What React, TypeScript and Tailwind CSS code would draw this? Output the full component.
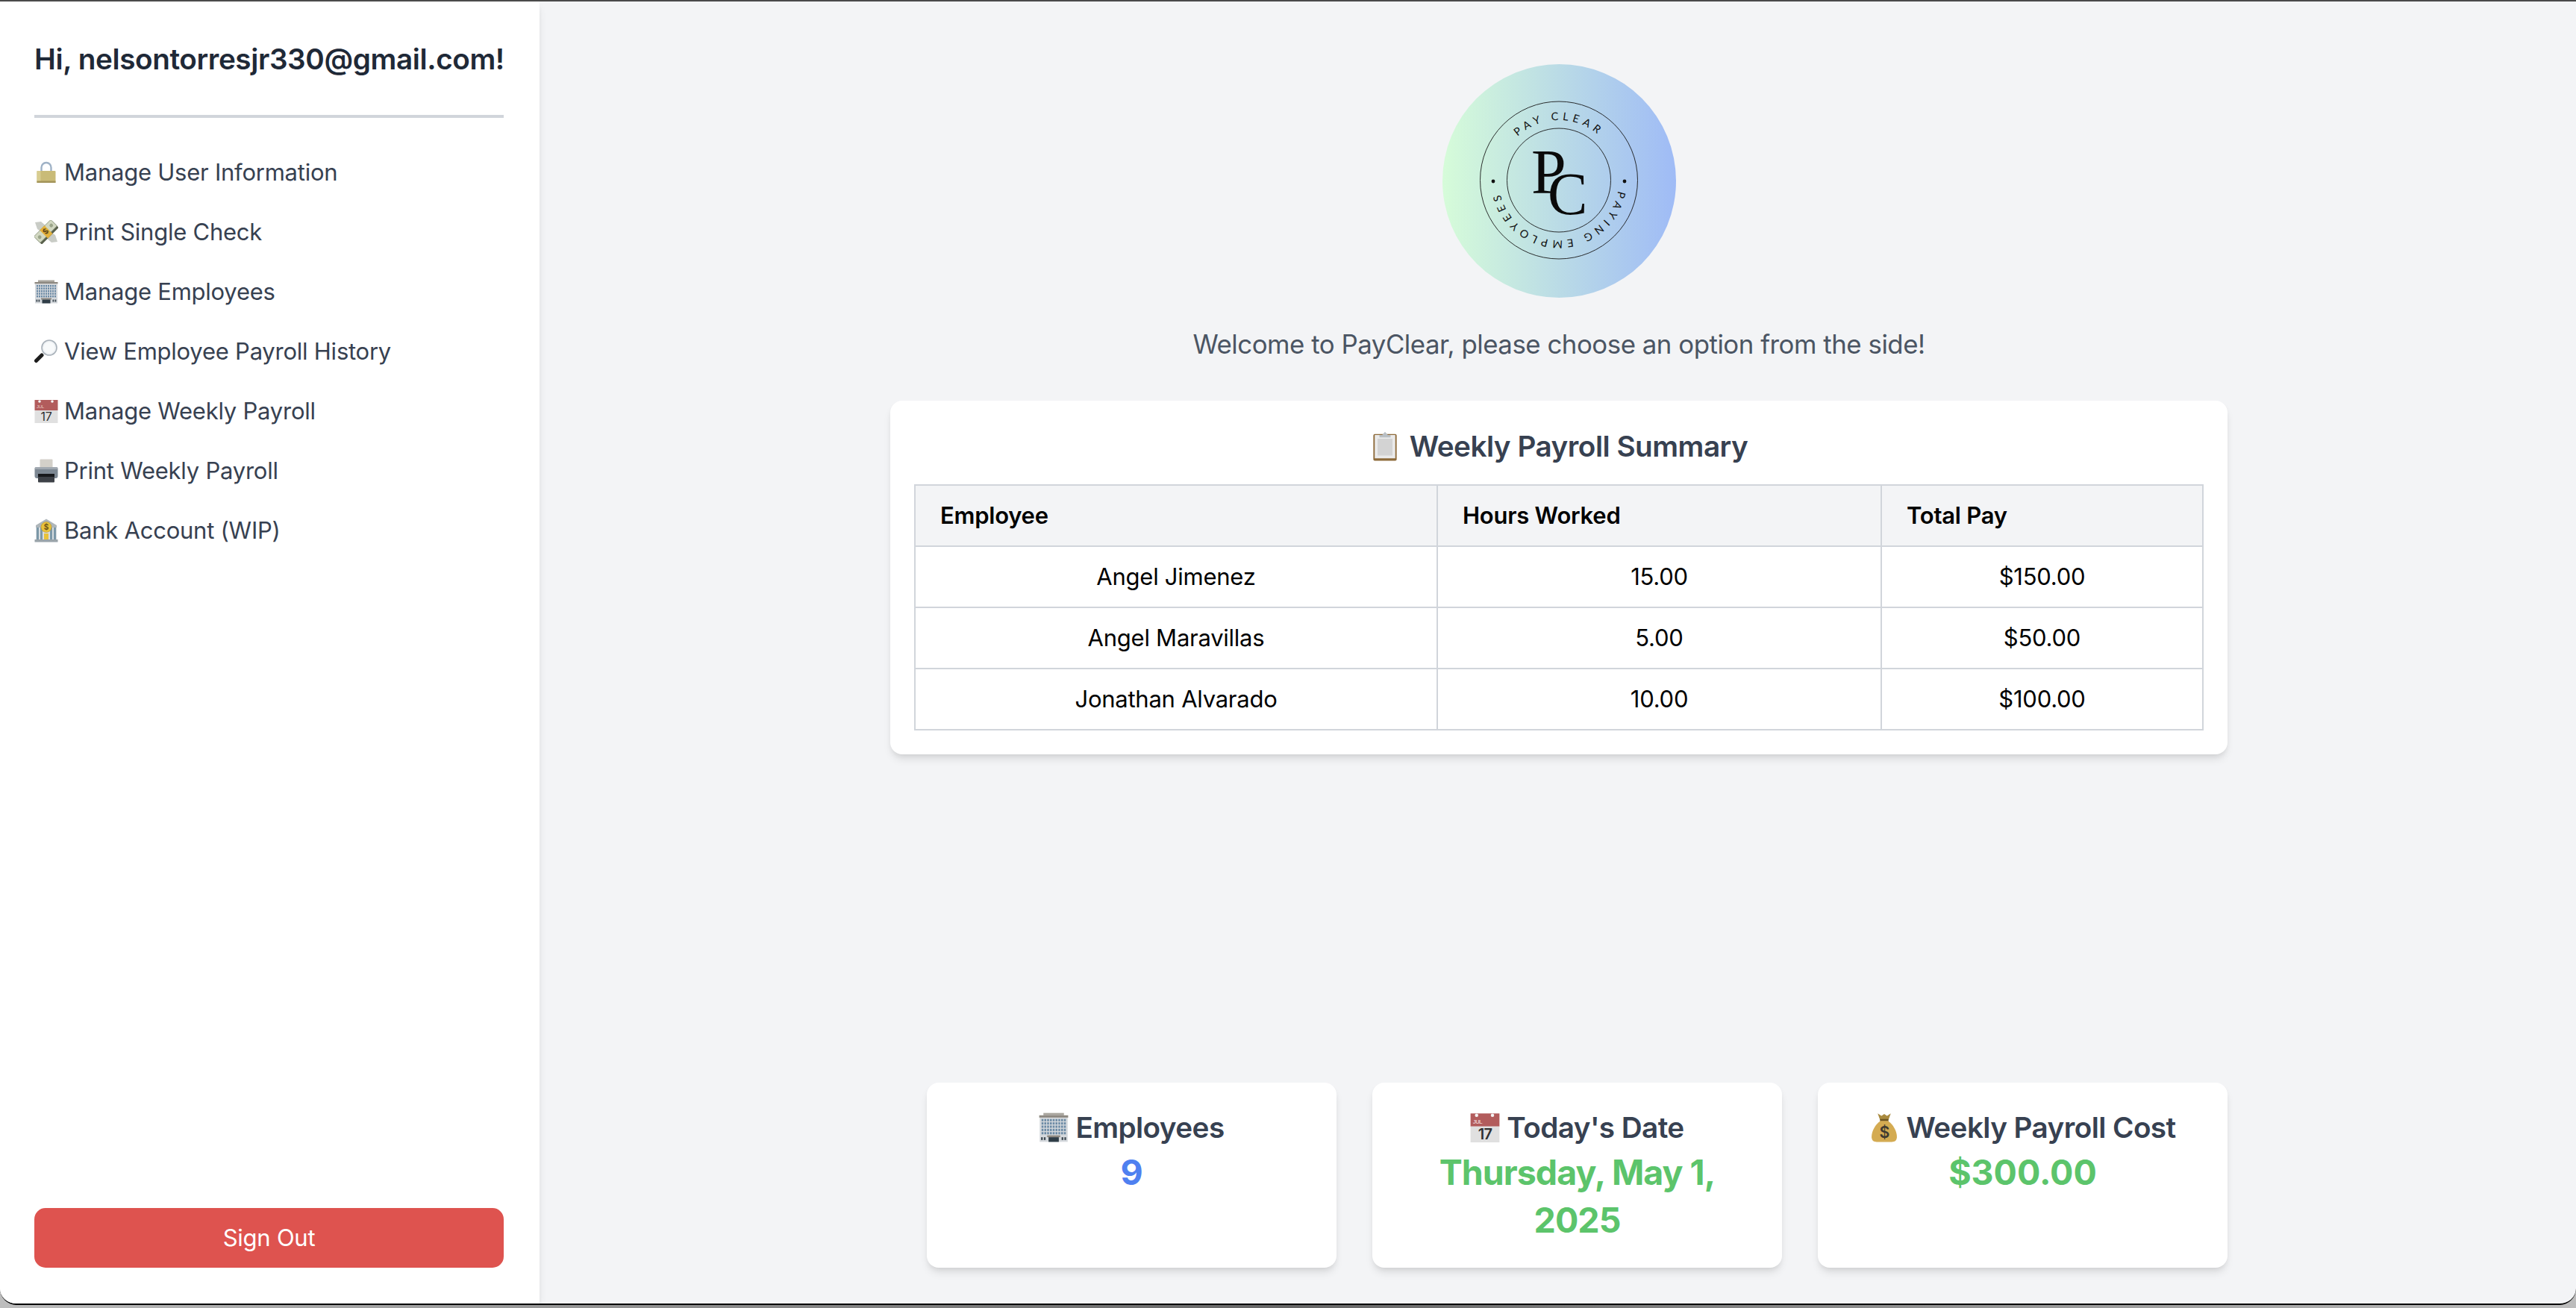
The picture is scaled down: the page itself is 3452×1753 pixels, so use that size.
import type { ReactNode } from "react";

function Emoji({ size = 32, children }: { size?: number; children: ReactNode }) {
  return (
    <svg width={size} height={size} viewBox="0 0 32 32" className="shrink-0">
      {children}
    </svg>
  );
}

const LockIcon = () => (
  <>
    <path d="M9.5 16V9.5a6.5 6.5 0 0 1 13 0V16" fill="none" stroke="#9fb2c6" strokeWidth="2.4" />
    <rect x="3.5" y="14" width="25" height="16" rx="1" fill="#c9bb78" />
    <rect x="3.5" y="14" width="5" height="16" fill="#d8cd90" />
    <rect x="3.5" y="27.5" width="25" height="2.5" fill="#a3945a" />
  </>
);

const MoneyWingsIcon = () => (
  <>
    <path d="M1 3 L9 2 L17 9 L10 16 L4 12 Z" fill="#c9ccc6" />
    <path d="M31 29 L23 30 L15 23 L22 16 L28 20 Z" fill="#c9ccc6" />
    <g transform="rotate(-45 16 16)">
      <rect x="0" y="11.5" width="32" height="12" rx="1" fill="#59604c" />
      <rect x="0" y="8.5" width="32" height="12" rx="1" fill="#d2d8c2" stroke="#7f8a70" strokeWidth="0.7" />
      <circle cx="5" cy="14.5" r="2.4" fill="#9ba58a" />
      <circle cx="27" cy="14.5" r="2.4" fill="#9ba58a" />
      <rect x="11.5" y="8" width="9" height="15.5" fill="#e3b23c" />
      <text x="16" y="18" textAnchor="middle" fontSize="10" fontWeight="700" fill="#5b4418" fontFamily="Inter, sans-serif">$</text>
    </g>
  </>
);

const BuildingIcon = () => (
  <>
    <rect x="5" y="0.5" width="22" height="2.5" fill="#a8a49c" />
    <rect x="0.5" y="3" width="31" height="2.5" fill="#8d8880" />
    <rect x="1" y="5.5" width="30" height="26" fill="#d4d8dc" />
    {[7, 10.5, 14, 17.5, 21].map((y) =>
      [3, 6, 9, 12, 15, 18, 21, 24, 27].map((x) => (
        <rect key={`${x}-${y}`} x={x} y={y} width="2" height="2.4" fill="#6b8aa5" />
      ))
    )}
    <rect x="9" y="24.5" width="14" height="2" fill="#8d8880" />
    <rect x="10.5" y="26.5" width="11" height="5" fill="#2f3d47" />
    {[3, 6, 25, 28].map((x) => (
      <rect key={x} x={x - 0.5} y="26.5" width="1.8" height="3" fill="#3f4a52" />
    ))}
  </>
);

const MagnifierIcon = () => (
  <>
    <path d="M10 21 L2.5 28.5" stroke="#1d1d1d" strokeWidth="5" strokeLinecap="round" />
    <circle cx="20" cy="11" r="10" fill="#eef1f4" stroke="#a9b2ba" strokeWidth="1.6" />
    <circle cx="20" cy="11" r="7.5" fill="#f8fafb" />
  </>
);

const CalendarIcon = () => (
  <>
    <rect x="0.5" y="1" width="31" height="14" fill="#b25c5c" />
    <rect x="0.5" y="15" width="31" height="17" fill="#e0e0e0" />
    <circle cx="7" cy="3" r="1.8" fill="#f4f4f4" />
    <circle cx="24" cy="3" r="1.8" fill="#f4f4f4" />
    <text x="3" y="12" fontSize="6" fill="#e8c8c8" fontFamily="Liberation Sans, sans-serif">JUL</text>
    <text x="16" y="29" textAnchor="middle" fontSize="16" fill="#303030" fontFamily="Inter, sans-serif">17</text>
  </>
);

const PrinterIcon = () => (
  <>
    <rect x="7.5" y="0.5" width="17" height="13" rx="1" fill="#d3d0c9" />
    <rect x="0.5" y="11" width="31" height="15" rx="3" fill="#7d8893" />
    <rect x="0.5" y="11" width="31" height="3" rx="1.5" fill="#a0a8b0" />
    <rect x="5" y="20" width="22" height="11.5" rx="1" fill="#3d4147" />
    <rect x="5" y="20" width="22" height="4" fill="#17191c" />
  </>
);

const BankIcon = () => (
  <>
    <path d="M16 0.5 L30 9 V12 H2 V9 Z" fill="#aeb6ba" />
    <rect x="2" y="12" width="28" height="16" fill="#d8dde0" />
    {[3, 8, 21, 26].map((x) => (
      <rect key={x} x={x} y="12" width="3" height="16" fill="#7c98a8" />
    ))}
    <rect x="13" y="20" width="6" height="9" fill="#e8c23a" />
    <rect x="0.5" y="28" width="31" height="3.5" fill="#9aa4aa" />
    <circle cx="16" cy="11.5" r="7" fill="#e8c23a" stroke="#b9922a" strokeWidth="0.6" />
    <text x="16" y="15" textAnchor="middle" fontSize="10" fontWeight="700" fill="#6b5218" fontFamily="Inter, sans-serif">$</text>
  </>
);

const ClipboardIcon = () => (
  <>
    <rect x="3.5" y="3" width="25" height="28.5" rx="1.5" fill="#8d6a3a" />
    <rect x="5" y="4" width="22" height="25" fill="#eaeaea" />
    <rect x="8" y="8" width="16" height="18" fill="#d3d3d3" />
    <path d="M16 0.5 L19 4 H22 V6.5 H10 V4 H13 Z" fill="#b9bfc4" />
  </>
);

const MoneyBagIcon = () => (
  <>
    <path d="M9 1 L13 3.5 L16 1.5 L19 3.5 L23 1 L20.5 8 H11.5 Z" fill="#a98a3f" />
    <rect x="11.5" y="7" width="9" height="2.5" fill="#6e5623" />
    <path d="M12 9 C6 13 2 21 2.5 27 C3 30.5 5 31.5 8 31.5 H24 C27 31.5 29 30.5 29.5 27 C30 21 26 13 20 9 Z" fill="#d4ab52" />
    <text x="16" y="27" textAnchor="middle" fontSize="17" fontWeight="600" fill="#3f3a30" fontFamily="Inter, sans-serif">$</text>
  </>
);

const navItems = [
  { label: "Manage User Information", icon: <LockIcon /> },
  { label: "Print Single Check", icon: <MoneyWingsIcon /> },
  { label: "Manage Employees", icon: <BuildingIcon /> },
  { label: "View Employee Payroll History", icon: <MagnifierIcon /> },
  { label: "Manage Weekly Payroll", icon: <CalendarIcon /> },
  { label: "Print Weekly Payroll", icon: <PrinterIcon /> },
  { label: "Bank Account (WIP)", icon: <BankIcon /> },
];

const payroll = [
  { name: "Angel Jimenez", hours: "15.00", pay: "$150.00" },
  { name: "Angel Maravillas", hours: "5.00", pay: "$50.00" },
  { name: "Jonathan Alvarado", hours: "10.00", pay: "$100.00" },
];

function Logo() {
  return (
    <svg width="313" height="313" viewBox="0 0 313 313" className="shrink-0">
      <defs>
        <linearGradient id="logoFill" x1="0" y1="0" x2="1" y2="0">
          <stop offset="0" stopColor="#d6fcd9" />
          <stop offset="0.5" stopColor="#badbe6" />
          <stop offset="1" stopColor="#9fbbf6" />
        </linearGradient>
        <path id="topArc" d="M156 236 A80.5 80.5 0 1 1 156 75 A80.5 80.5 0 1 1 156 236" />
        <path id="bottomArc" d="M156 75 A80.5 80.5 0 1 1 156 236 A80.5 80.5 0 1 1 156 75" />
      </defs>
      <circle cx="156.5" cy="156.5" r="156.5" fill="url(#logoFill)" />
      <circle cx="156" cy="155.5" r="105.5" fill="none" stroke="#1a1a1a" strokeWidth="0.9" />
      <circle cx="156" cy="155.5" r="69.5" fill="none" stroke="#1a1a1a" strokeWidth="0.9" />
      <circle cx="68" cy="157" r="2.4" fill="#111" />
      <circle cx="244" cy="157" r="2.4" fill="#111" />
      <text fontSize="14.5" letterSpacing="5.4" fill="#111" fontFamily="Lato, sans-serif" textAnchor="middle">
        <textPath href="#topArc" startOffset="50%">PAY CLEAR</textPath>
      </text>
      <text fontSize="14.5" letterSpacing="5.4" fill="#111" fontFamily="Lato, sans-serif" textAnchor="middle">
        <textPath href="#bottomArc" startOffset="50%">PAYING EMPLOYEES</textPath>
      </text>
      <text x="119" y="173" fontSize="84" fill="#0a0a0a" fontFamily="Liberation Serif, serif">P</text>
      <text x="141" y="201" fontSize="80" fill="#0a0a0a" fontFamily="Liberation Serif, serif">C</text>
    </svg>
  );
}

function StatCard({ icon, label, children }: { icon: ReactNode; label: string; children: ReactNode }) {
  return (
    <div className="w-[549px] rounded-[16px] bg-white px-[46px] pt-[34px] pb-[32px] text-center shadow-[0_8px_12px_-2px_rgba(0,0,0,0.1),0_4px_8px_-4px_rgba(0,0,0,0.1)]">
      <div className="mb-[2px] flex items-center justify-center gap-[9px] text-[38.7px] leading-[52px] font-semibold tracking-[-0.58px] text-[#374151]">
        <Emoji size={40}>{icon}</Emoji>
        <span>{label}</span>
      </div>
      {children}
    </div>
  );
}

export default function App() {
  return (
    <div className="h-[1753px] w-[3452px] overflow-hidden bg-gradient-to-r from-[#bdbdbd] via-[#666666] to-[#bdbdbd] font-[Inter,sans-serif]">
      <div className="h-[2px] bg-[#4a4a4a]" />
      <div className="flex h-[1747px] overflow-hidden rounded-b-[22px] border-b-2 border-black bg-[#f3f4f6]">
        <aside className="relative z-10 flex w-[723px] shrink-0 flex-col bg-white pt-[46px] pr-[48px] pb-[48px] pl-[46px] shadow-[0_8px_12px_-2px_rgba(0,0,0,0.1),0_4px_8px_-4px_rgba(0,0,0,0.1)]">
          <h2 className="text-[38.7px] leading-[62px] font-semibold tracking-[-0.4px] whitespace-nowrap text-[#1f2937]">
            Hi, nelsontorresjr330@gmail.com!
          </h2>
          <div className="mt-[44px] h-[4px] bg-[#d1d5db]" />
          <nav className="mt-[33px] flex flex-col">
            {navItems.map((item) => (
              <a key={item.label} className="flex h-[80px] items-center gap-[8px] text-[31px] tracking-[-0.24px] text-[#374151]">
                <Emoji>{item.icon}</Emoji>
                <span>{item.label}</span>
              </a>
            ))}
          </nav>
          <button className="mt-auto h-[80px] w-full rounded-[15px] bg-[#de534f] text-[31px] tracking-[-0.24px] text-white">
            Sign Out
          </button>
        </aside>

        <main className="flex min-w-0 flex-1 flex-col items-center pt-[84px] pb-[48px] pl-[3px]">
          <Logo />
          <p className="mt-[38px] text-[34.8px] leading-[48px] tracking-[-0.47px] text-[#4b5563]">
            Welcome to PayClear, please choose an option from the side!
          </p>
          <section className="mt-[52px] w-[1792px] rounded-[16px] bg-white px-[32px] pt-[34px] pb-[32px] shadow-[0_8px_12px_-2px_rgba(0,0,0,0.1),0_4px_8px_-4px_rgba(0,0,0,0.1)]">
            <h3 className="flex items-center justify-center gap-[13px] text-[38.7px] leading-[54px] font-semibold tracking-[-0.5px] text-[#374151]">
              <Emoji size={40}><ClipboardIcon /></Emoji>
              <span>Weekly Payroll Summary</span>
            </h3>
            <table className="mt-[24px] w-full table-fixed border-collapse text-[31px] tracking-[-0.25px] text-black">
              <colgroup>
                <col className="w-[700px]" />
                <col className="w-[595px]" />
                <col />
              </colgroup>
              <thead>
                <tr className="h-[82px] bg-[#f3f4f6]">
                  {["Employee", "Hours Worked", "Total Pay"].map((h) => (
                    <th key={h} className="border-2 border-[#d1d5db] px-[33px] text-left font-semibold">
                      {h}
                    </th>
                  ))}
                </tr>
              </thead>
              <tbody>
                {payroll.map((row) => (
                  <tr key={row.name} className="h-[82px] text-center">
                    <td className="border-2 border-[#d1d5db]">{row.name}</td>
                    <td className="border-2 border-[#d1d5db]">{row.hours}</td>
                    <td className="border-2 border-[#d1d5db]">{row.pay}</td>
                  </tr>
                ))}
              </tbody>
            </table>
          </section>

          <div className="mt-auto flex w-[1792px] justify-end gap-[48px]">
            <StatCard icon={<BuildingIcon />} label="Employees">
              <p className="text-[46.5px] leading-[64px] font-bold text-[#4f80f0]">9</p>
            </StatCard>
            <StatCard icon={<CalendarIcon />} label="Today's Date">
              <p className="text-[46.5px] leading-[64px] font-bold tracking-[-0.96px] text-[#5cc46b]">Thursday, May 1, 2025</p>
            </StatCard>
            <StatCard icon={<MoneyBagIcon />} label="Weekly Payroll Cost">
              <p className="text-[46.5px] leading-[64px] font-bold text-[#5cc46b]">$300.00</p>
            </StatCard>
          </div>
        </main>
      </div>
    </div>
  );
}
